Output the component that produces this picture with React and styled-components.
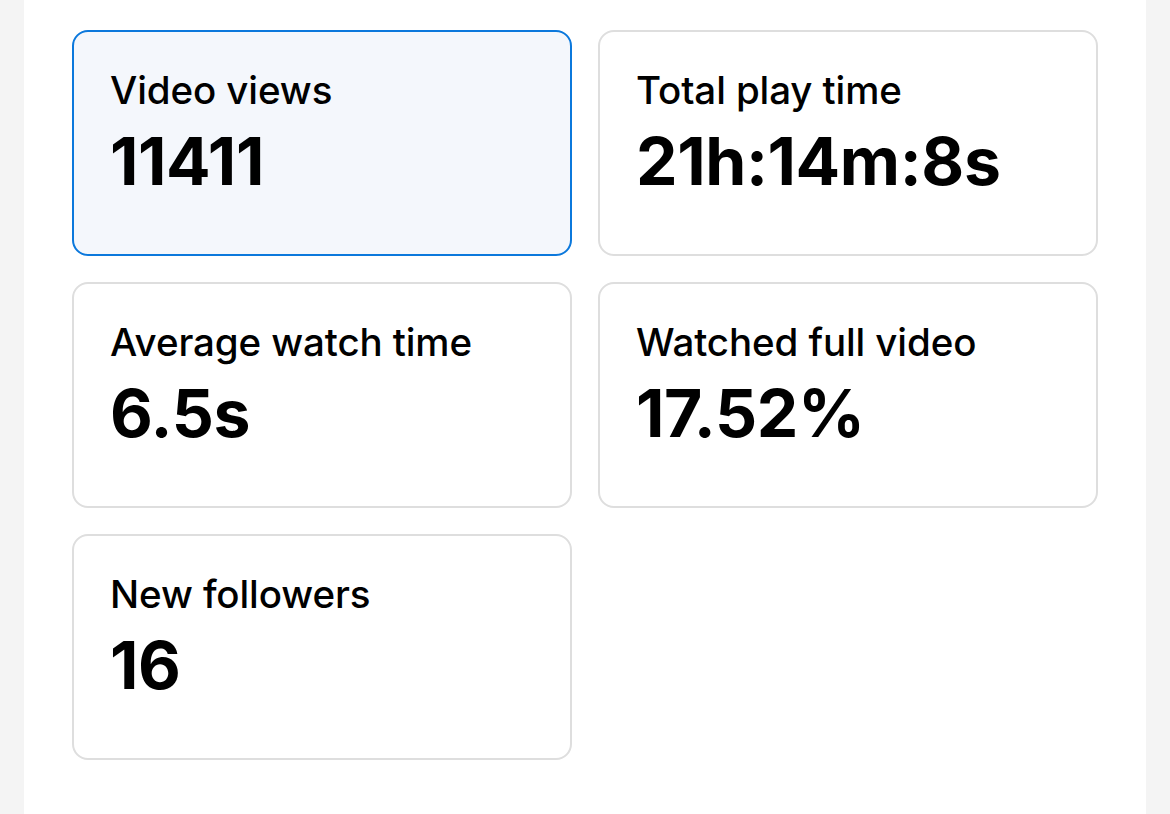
import React from 'react'
import styled, { createGlobalStyle } from 'styled-components'

const GlobalStyle = createGlobalStyle`
  html, body {
    margin: 0;
    padding: 0;
    background: #f4f4f4;
    font-family: Inter, "Noto Sans", sans-serif;
  }
`

const stats = [
  { label: 'Video views', value: '11411', active: true },
  { label: 'Total play time', value: '21h:14m:8s' },
  { label: 'Average watch time', value: '6.5s' },
  { label: 'Watched full video', value: '17.52%' },
  { label: 'New followers', value: '16' },
]

const App = () => {
  return (
    <>
      <GlobalStyle />
      <Page>
        <Panel>
          <Grid>
            {stats.map((s) => (
              <Card key={s.label} $active={s.active}>
                <Label>{s.label}</Label>
                <Value>{s.value}</Value>
              </Card>
            ))}
          </Grid>
        </Panel>
      </Page>
    </>
  )
}

export default App

const Page = styled.div`
  min-height: 814px;
  padding: 0 24px;
  box-sizing: border-box;
  display: flex;
`

const Panel = styled.div`
  flex: 1;
  background: #fff;
  padding: 30px 48px 0;
  min-height: 814px;
  box-sizing: border-box;
`

const Grid = styled.div`
  display: grid;
  grid-template-columns: 500px 500px;
  grid-auto-rows: 226px;
  gap: 26px;
`

const Card = styled.div`
  box-sizing: border-box;
  border-radius: 16px;
  border: 2px solid ${(p) => (p.$active ? '#0b78dc' : '#dedede')};
  background: ${(p) => (p.$active ? '#f4f7fc' : '#fff')};
  padding: 36px 36px;
  color: #000;
`

const Label = styled.div`
  font-size: 38.5px;
  line-height: 44px;
  font-weight: 500;
  letter-spacing: -0.1px;
`

const Value = styled.div`
  margin-top: 9px;
  font-size: 66px;
  line-height: 80px;
  font-weight: 700;
  letter-spacing: -0.4px;
`
